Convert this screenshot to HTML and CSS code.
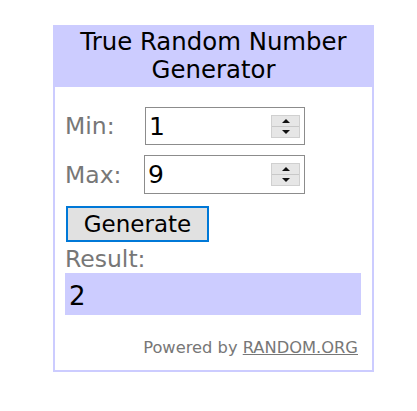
FILE: index.html
```html
<!DOCTYPE html>
<html>
<head>
<meta charset="utf-8">
<link rel="stylesheet" href="styles.css">
</head>
<body>
<div class="widget">
  <div class="header">True Random Number Generator</div>
  <div class="content">
    <div class="fields">
      <label class="label">Min:</label>
      <div class="numbox"><span class="val">1</span><span class="spin"><span class="up"></span><span class="down"></span></span></div>
      <label class="label">Max:</label>
      <div class="numbox max"><span class="val">9</span><span class="spin"><span class="up"></span><span class="down"></span></span></div>
    </div>
    <button class="gen">Generate</button>
    <div class="label result-label">Result:</div>
    <div class="result">2</div>
    <div class="powered">Powered by <a href="#">RANDOM.ORG</a></div>
  </div>
</div>
</body>
</html>
```
FILE: styles.css
```css
html, body { margin: 0; padding: 0; background: #fff; }
body { font-family: "DejaVu Sans", Verdana, sans-serif; }
.widget {
  margin: 25px 0 0 53px;
  width: 317px;
  border: 2px solid #ccccff;
  border-top: none;
}
.header {
  background: #ccccff;
  margin: 0 -2px;
  height: 62px;
  box-sizing: border-box;
  padding: 3px 10px 0;
  text-align: center;
  font-size: 24.4px;
  line-height: 28px;
  color: #000;
}
.content { padding: 20px 11px 12px 10px; }
.fields {
  display: grid;
  grid-template-columns: 80px 160px;
  row-gap: 10px;
  align-items: center;
}
.label { color: #777; font-size: 23.5px; }
.numbox {
  height: 38px;
  box-sizing: border-box;
  border: 1px solid #8c8c8c;
  display: flex;
  align-items: center;
  padding: 0 4px 0 3px;
}
.numbox.max { margin-left: -1px; height: 39px; }
.val { flex: 1; font-size: 25px; color: #000; line-height: 1; }
.spin {
  display: flex; flex-direction: column;
  width: 29px; height: 23px;
  border: 1px solid #d0d0d0;
  box-sizing: border-box;
}
.spin span {
  flex: 1; background: #e6e6e6; position: relative;
}
.spin .up { border-bottom: 1px solid #c8c8c8; }
.spin span::after {
  content: ""; position: absolute; left: 50%; top: 50%;
  transform: translate(-50%, -50%);
  border-left: 4px solid transparent; border-right: 4px solid transparent;
}
.spin .up::after { border-bottom: 4px solid #111; }
.spin .down::after { border-top: 4px solid #111; }
.gen {
  display: block;
  margin: 12px 0 0 1px;
  width: 143px; height: 36px;
  border: 2px solid #0078d7;
  background: #e1e1e1;
  font-family: "DejaVu Sans", Verdana, sans-serif;
  font-size: 23px;
  color: #000;
  padding: 0;
}
.result-label { margin-top: 4px; line-height: 27px; }
.result {
  margin-top: 0;
  background: #ccccff;
  height: 42px;
  font-size: 26px;
  line-height: 46px;
  padding-left: 4px;
  color: #000;
}
.powered {
  margin-top: 23px;
  text-align: right;
  font-size: 16.3px;
  color: #777;
  padding-right: 3px;
  line-height: 20px;
}
.powered a { color: #777; }
```
